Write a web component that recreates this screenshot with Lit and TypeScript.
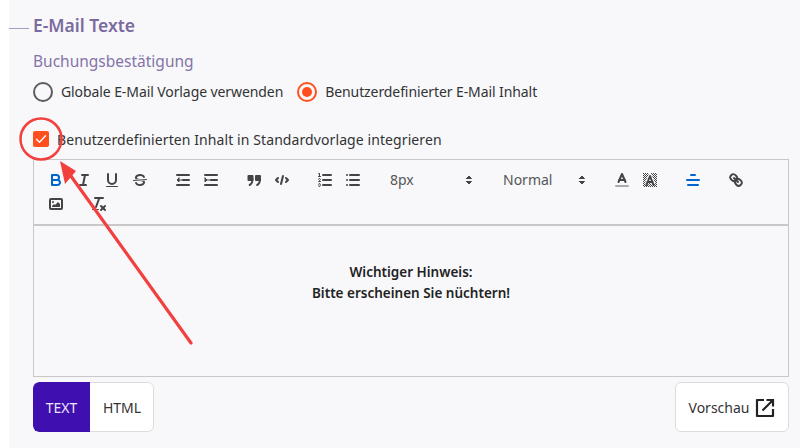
import { LitElement, html, css, svg } from "lit";
import { customElement } from "lit/decorators.js";

const ic = (body: unknown, cls = "") => html`<button class="tb ${cls}"><svg viewBox="0 0 18 18">${body}</svg></button>`;

const arrows = svg`<polygon class="s1 f" points="6.5 10.5 9 13 11.5 10.5 6.5 10.5"></polygon><polygon class="s1 f" points="6.5 7.5 9 5 11.5 7.5 6.5 7.5"></polygon>`;

@customElement("app-root")
export class AppRoot extends LitElement {
  static styles = css`
    :host { display: block; position: relative; width: 800px; height: 448px; overflow: hidden; background: #fff;
      font-family: "Noto Sans", sans-serif; color: #333; font-size: 14px; }
    .panel { margin-left: 9px; height: 448px; background: #f8f8fb; box-sizing: border-box; padding-top: 13px; }
    .head { display: flex; align-items: center; gap: 4px; height: 24px; }
    .rule { width: 20px; height: 1px; background: #a79dc4; margin-top: 6px; }
    h2 { margin: 0; font-size: 17.5px; line-height: 24px; font-weight: 600; color: #7a6a9e; }
    .body { padding: 0 11px 0 24px; }
    h3 { margin: 12px 0 0; font-size: 15.5px; line-height: 24px; font-weight: 400; color: #8474a8; }
    .radios { display: flex; align-items: center; height: 20px; margin-top: 9px; }
    .radio { display: flex; align-items: center; gap: 8px; margin-right: 14px; line-height: 20px; color: #333; letter-spacing: -0.09px; }
    .dot { width: 20px; height: 20px; box-sizing: border-box; border: 2px solid #5c5c5c; border-radius: 50%; display: flex; align-items: center; justify-content: center; }
    .dot.on { border-color: #ff4f1f; }
    .dot.on::after { content: ""; width: 10px; height: 10px; border-radius: 50%; background: #ff4f1f; }
    .check { display: flex; align-items: center; gap: 8px; height: 20px; margin-top: 27px; letter-spacing: 0.09px; }
    .box { width: 16px; height: 16px; background: #ff4f1f; border-radius: 2px; display: flex; }
    .box svg { width: 16px; height: 16px; }
    .toolbar { margin-top: 10px; box-sizing: border-box; height: 67px; border: 1px solid #c8c8c8; border-bottom-width: 2px; padding: 8px; display: flex; flex-wrap: wrap; align-content: flex-start; }
    .grp { display: flex; margin-right: 15px; }
    .tb { width: 28px; height: 24px; padding: 3px 5px; border: 0; background: none; display: block; }
    .tb svg { display: block; width: 18px; height: 18px; }
    svg .s { fill: none; stroke: #444; stroke-width: 2; stroke-linecap: round; stroke-linejoin: round; }
    svg .s1 { fill: none; stroke: #444; stroke-width: 1; stroke-linecap: round; stroke-linejoin: round; }
    svg .f { fill: #444; }
    .act svg .s { stroke: #06c; }
    .pick { width: 98px; height: 24px; position: relative; display: flex; align-items: center; padding: 0 0 2px 8px; box-sizing: border-box; font-size: 14px; font-weight: 400; color: #555; }
    .pick svg { position: absolute; right: 2px; top: 3px; width: 18px; height: 18px; }
    .editor { box-sizing: border-box; height: 151px; border: 1px solid #c8c8c8; border-top: 0; padding: 36px 15px 0; text-align: center; font-size: 13.5px; font-weight: 600; line-height: 21px; color: #222; }
    .editor p { margin: 0; }
    .foot { display: flex; justify-content: space-between; margin-top: 5px; }
    .toggle { display: flex; height: 50px; border-radius: 6px; overflow: hidden; box-sizing: border-box; }
    .seg { display: flex; align-items: center; justify-content: center; font-size: 14px; box-sizing: border-box; }
    .seg.a { width: 57px; background: #3f0fb0; color: #eee6ff; border-radius: 6px 0 0 6px; }
    .seg.b { width: 64px; background: #fff; border: 1px solid #dcdcdc; border-left: 0; border-radius: 0 6px 6px 0; color: #333; padding-left: 1px; }
    .preview { width: 114px; height: 50px; box-sizing: border-box; background: #fff; border: 1px solid #dcdcdc; border-radius: 6px; display: flex; align-items: center; justify-content: center; gap: 6px; font-size: 14px; color: #333; }
    .preview svg { width: 20px; height: 20px; margin-top: 2px; }
    .overlay { position: absolute; left: 0; top: 0; width: 800px; height: 448px; pointer-events: none; }
  `;

  render() {
    return html`
      <div class="panel">
        <div class="head"><span class="rule"></span><h2>E-Mail Texte</h2></div>
        <div class="body">
          <h3>Buchungsbestätigung</h3>
          <div class="radios">
            <label class="radio"><span class="dot"></span>Globale E-Mail Vorlage verwenden</label>
            <label class="radio"><span class="dot on"></span>Benutzerdefinierter E-Mail Inhalt</label>
          </div>
          <div class="check">
            <span class="box"><svg viewBox="0 0 16 16"><path d="M3.5 8.2l3 3 6-6.4" fill="none" stroke="#fff" stroke-width="1.4" stroke-linecap="round" stroke-linejoin="round"></path></svg></span>
            Benutzerdefinierten Inhalt in Standardvorlage integrieren
          </div>
          <div class="toolbar">
            <div class="grp">
              ${ic(svg`<path class="s" d="M5,4H9.5A2.5,2.5,0,0,1,12,6.5v0A2.5,2.5,0,0,1,9.5,9H5V4Z"></path><path class="s" d="M5,9h5.5A2.5,2.5,0,0,1,13,11.5v0A2.5,2.5,0,0,1,10.5,14H5V9Z"></path>`, "act")}
              ${ic(svg`<line class="s" x1="7" x2="13" y1="4" y2="4"></line><line class="s" x1="5" x2="11" y1="14" y2="14"></line><line class="s" x1="8" x2="10" y1="14" y2="4"></line>`)}
              ${ic(svg`<path class="s" d="M5,3V9a4,4,0,0,0,4,4H9a4,4,0,0,0,4-4V3"></path><rect class="f" x="3" y="15" width="12" height="1" rx=".5"></rect>`)}
              ${ic(svg`<line class="s1" x1="15.5" x2="2.5" y1="8.5" y2="9.5"></line><path class="f" d="M9.007,8C6.542,7.791,6,7.519,6,6.5,6,5.792,7.283,5,9,5c1.571,0,2.765.679,2.969,1.309a1,1,0,0,0,1.9-.617C13.356,4.106,11.354,3,9,3,6.2,3,4,4.538,4,6.5a3.2,3.2,0,0,0,.5,1.843Z"></path><path class="f" d="M8.984,10C11.457,10.208,12,10.479,12,11.5c0,.708-1.283,1.5-3,1.5-1.571,0-2.765-.679-2.969-1.309a1,1,0,1,0-1.9.617C4.644,13.894,6.646,15,9,15c2.8,0,5-1.538,5-3.5a3.2,3.2,0,0,0-.5-1.843Z"></path>`)}
            </div>
            <div class="grp">
              ${ic(svg`<line class="s" x1="3" x2="15" y1="14" y2="14"></line><line class="s" x1="3" x2="15" y1="4" y2="4"></line><line class="s" x1="9" x2="15" y1="9" y2="9"></line><polyline class="s1 f" points="5 7 5 11 3 9 5 7"></polyline><line class="s1" x1="4" x2="9" y1="9" y2="9"></line>`)}
              ${ic(svg`<line class="s" x1="3" x2="15" y1="14" y2="14"></line><line class="s" x1="3" x2="15" y1="4" y2="4"></line><line class="s" x1="9" x2="15" y1="9" y2="9"></line><polyline class="s1 f" points="3 7 3 11 5 9 3 7"></polyline><line class="s1" x1="4" x2="9" y1="9" y2="9"></line>`)}
            </div>
            <div class="grp">
              ${ic(svg`<rect class="f" x="2.5" y="4" width="6" height="6" rx="1"></rect><rect class="f" x="10" y="4" width="6" height="6" rx="1"></rect><path class="s" d="M7.5,8c0,3-.8,5-2.8,6"></path><path class="s" d="M15,8c0,3-.8,5-2.8,6"></path>`)}
              ${ic(svg`<polyline class="s" points="5 7 3 9 5 11"></polyline><polyline class="s" points="13 7 15 9 13 11"></polyline><line class="s" x1="10" x2="8" y1="5" y2="13"></line>`)}
            </div>
            <div class="grp">
              ${ic(svg`<line class="s" x1="7" x2="15" y1="4" y2="4"></line><line class="s" x1="7" x2="15" y1="9" y2="9"></line><line class="s" x1="7" x2="15" y1="14" y2="14"></line><path class="f" d="M3.5,6A0.5,0.5,0,0,1,3,5.5V3.085l-0.276.138A0.5,0.5,0,0,1,2.053,3c-0.124-.247-0.023-0.324.224-0.447l1-.5A0.5,0.5,0,0,1,4,2.5v3A0.5,0.5,0,0,1,3.5,6Z"></path><line class="s1" x1="2.5" x2="4.5" y1="5.5" y2="5.5"></line><path class="s1" d="M4.5,10.5h-2c0-.234,1.85-1.076,1.85-2.234A0.959,0.959,0,0,0,2.5,8.156"></path><path class="s1" d="M2.5,14.846a0.959,0.959,0,0,0,1.85-.109A0.7,0.7,0,0,0,3.75,14a0.688,0.688,0,0,0,.6-0.736,0.959,0.959,0,0,0-1.85-.109"></path>`)}
              ${ic(svg`<line class="s" x1="6" x2="15" y1="4" y2="4"></line><line class="s" x1="6" x2="15" y1="9" y2="9"></line><line class="s" x1="6" x2="15" y1="14" y2="14"></line><line class="s" x1="3" x2="3" y1="4" y2="4"></line><line class="s" x1="3" x2="3" y1="9" y2="9"></line><line class="s" x1="3" x2="3" y1="14" y2="14"></line>`)}
            </div>
            <div class="grp"><div class="pick">8px<svg viewBox="0 0 18 18">${arrows}</svg></div></div>
            <div class="grp"><div class="pick">Normal<svg viewBox="0 0 18 18">${arrows}</svg></div></div>
            <div class="grp">
              ${ic(svg`<line x1="3" x2="15" y1="15" y2="15" stroke="#aaa" stroke-width="2" stroke-linecap="round"></line><polyline class="s" points="5.5 11 9 3 12.5 11"></polyline><line class="s" x1="11.63" x2="6.38" y1="9" y2="9"></line>`)}
              ${ic(svg`<defs><pattern id="chk" width="2" height="2" patternUnits="userSpaceOnUse"><rect width="1" height="1" fill="#444"></rect><rect x="1" y="1" width="1" height="1" fill="#444"></rect></pattern></defs><rect x="2" y="2" width="14" height="14" fill="url(#chk)"></rect><polyline points="5.5 13 9 5 12.5 13" fill="none" stroke="#f8f8fb" stroke-width="4"></polyline><polyline class="s" points="5.5 14 9 5 12.5 14"></polyline><line class="s" x1="11.63" x2="6.38" y1="11" y2="11"></line>`)}
            </div>
            <div class="grp">
              ${ic(svg`<line class="s" x1="7" x2="11" y1="4" y2="4"></line><line class="s" x1="3" x2="15" y1="9" y2="9"></line><line class="s" x1="4" x2="14" y1="14" y2="14"></line>`, "act")}
            </div>
            <div class="grp">
              ${ic(svg`<line class="s" x1="7" x2="11" y1="7" y2="11"></line><path class="s" d="M8.9,4.577a3.476,3.476,0,0,1,.36,4.679A3.476,3.476,0,0,1,4.577,8.9C3.185,7.5,2.035,6.4,4.217,4.217S7.5,3.185,8.9,4.577Z"></path><path class="s" d="M13.423,9.1a3.476,3.476,0,0,0-4.679-.36,3.476,3.476,0,0,0,.36,4.679c1.392,1.392,2.5,2.542,4.679.36S14.815,10.5,13.423,9.1Z"></path>`)}
            </div>
            <div class="grp">
              ${ic(svg`<rect class="s" x="3" y="4" width="12" height="10" rx="1"></rect><circle class="f" cx="6" cy="7" r="1"></circle><polyline class="f" points="5 12 5 11 7 9 8 10 11 7 13 9 13 12 5 12"></polyline>`)}
            </div>
            <div class="grp">
              ${ic(svg`<line class="s" x1="5" x2="13" y1="3" y2="3"></line><line class="s" x1="6" x2="9.35" y1="12" y2="3"></line><line class="s" x1="11" x2="15" y1="11" y2="15"></line><line class="s" x1="15" x2="11" y1="11" y2="15"></line><rect class="f" x="2" y="14" width="7" height="1" rx=".5"></rect>`)}
            </div>
          </div>
          <div class="editor"><p>Wichtiger Hinweis:</p><p>Bitte erscheinen Sie nüchtern!</p></div>
          <div class="foot">
            <div class="toggle"><div class="seg a">TEXT</div><div class="seg b">HTML</div></div>
            <div class="preview">Vorschau
              <svg viewBox="0 0 20 20"><path d="M9 2H2v16h16v-7" fill="none" stroke="#222" stroke-width="2.2" stroke-linejoin="round"></path><path d="M7.5 12.5L17 3M11.5 2h6.5v6.5" fill="none" stroke="#222" stroke-width="2.2"></path></svg>
            </div>
          </div>
        </div>
      </div>
      <svg class="overlay" viewBox="0 0 800 448">
        <circle cx="41" cy="139" r="20.5" fill="none" stroke="#f2403f" stroke-width="2.5"></circle>
        <line x1="191" y1="343" x2="68" y2="172" stroke="#f2403f" stroke-width="3.2" stroke-linecap="round"></line>
        <polygon points="60,161 76,171 65,184" fill="#f2403f"></polygon>
      </svg>
    `;
  }
}
